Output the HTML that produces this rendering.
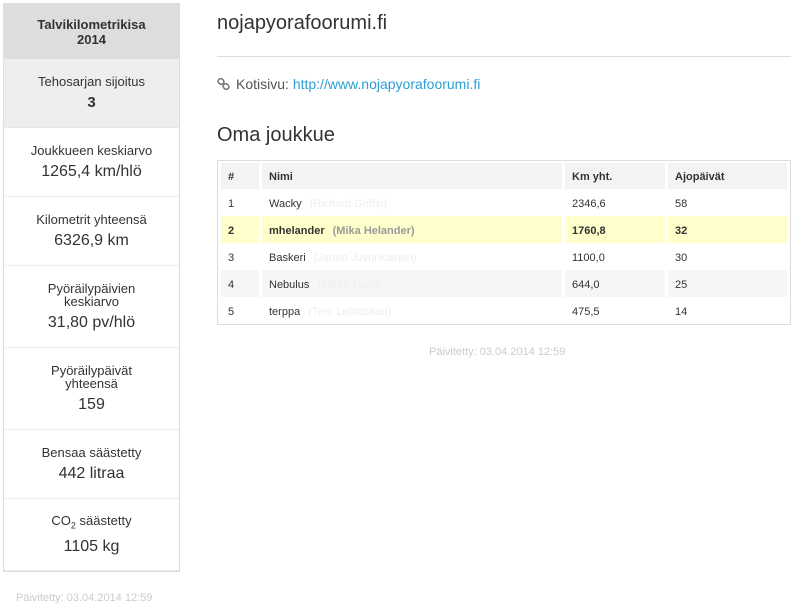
<!DOCTYPE html>
<html><head><meta charset="utf-8"><style>
body{margin:0;width:794px;height:607px;background:#fff;font-family:"Liberation Sans",sans-serif;color:#333;position:relative;overflow:hidden}
.sb{position:absolute;left:3px;top:3px;width:175px;border:1px solid #ddd;border-top:none}
.s{display:flex;flex-direction:column;justify-content:center;align-items:center;text-align:center;border-bottom:1px dotted #ddd;box-sizing:border-box;padding-top:2px}
.s .l{font-size:13px;line-height:13px}
.s .v{font-size:16px;line-height:20px;margin-top:5px}
.hd{background:#ddd;font-weight:bold;font-size:13px;line-height:15px;height:56px}
.ab{position:absolute}
table{position:absolute;left:217px;top:160px;width:574px;border:1px solid #ddd;border-spacing:3px 0;padding:2px 0 0;font-size:11px;border-collapse:separate}
td,th{height:27px;padding:3px 0 0 7px;text-align:left;box-sizing:border-box}
th{height:26px;padding-top:2px;background:#f3f3f3;font-weight:bold}
tr.y td{background:#ffffcc;font-weight:bold}
tr.g td{background:#f6f6f6}
.r{color:#eee;margin-left:8px}
tr.y .r{color:#999}
</style></head><body>
<div class="sb">
<div class="s hd" style="border:none"><div>Talvikilometrikisa<br>2014</div></div>
<div class="s" style="height:69px;background:#eee"><div class="l">Tehosarjan sijoitus</div><div class="v" style="font-weight:bold;font-size:15px">3</div></div>
<div class="s" style="height:69px"><div class="l">Joukkueen keskiarvo</div><div class="v">1265,4 km/hlö</div></div>
<div class="s" style="height:69px"><div class="l">Kilometrit yhteensä</div><div class="v">6326,9 km</div></div>
<div class="s" style="height:82px"><div class="l">Pyöräilypäivien<br>keskiarvo</div><div class="v">31,80 pv/hlö</div></div>
<div class="s" style="height:82px"><div class="l">Pyöräilypäivät<br>yhteensä</div><div class="v">159</div></div>
<div class="s" style="height:69px"><div class="l">Bensaa säästetty</div><div class="v">442 litraa</div></div>
<div class="s" style="height:72px"><div class="l">CO<sub style="font-size:9px">2</sub> säästetty</div><div class="v">1105 kg</div></div>
</div>
<div class="ab" style="left:16px;top:592px;font-size:11px;color:#ccc">Päivitetty: 03.04.2014 12:59</div>
<div class="ab" style="left:217px;top:12px;font-size:20px">nojapyorafoorumi.fi</div>
<div class="ab" style="left:217px;top:56px;width:574px;border-top:1px solid #ddd"></div>
<svg class="ab" style="left:217px;top:78px" width="13" height="12" viewBox="0 0 13 12"><g fill="none" stroke="#777" stroke-width="1.6"><rect x="1" y="1" width="6" height="5" rx="2.5" transform="rotate(35 4 3.5)"/><rect x="6" y="6" width="6" height="5" rx="2.5" transform="rotate(35 9 8.5)"/></g></svg>
<div class="ab" style="left:236px;top:76px;font-size:14px;color:#555">Kotisivu: <span style="color:#2a9fd6">http://www.nojapyorafoorumi.fi</span></div>
<div class="ab" style="left:217px;top:124px;font-size:20px">Oma joukkue</div>
<table>
<tr><th style="width:38px">#</th><th style="width:300px">Nimi</th><th style="width:100px">Km yht.</th><th>Ajopäivät</th></tr>
<tr><td>1</td><td>Wacky<span class="r">(Richard Griffin)</span></td><td>2346,6</td><td>58</td></tr>
<tr class="y"><td>2</td><td>mhelander<span class="r">(Mika Helander)</span></td><td>1760,8</td><td>32</td></tr>
<tr><td>3</td><td>Baskeri<span class="r">(Jarmo Juvonkainen)</span></td><td>1100,0</td><td>30</td></tr>
<tr class="g"><td>4</td><td>Nebulus<span class="r">(Mikko Nelo)</span></td><td>644,0</td><td>25</td></tr>
<tr><td>5</td><td>terppa<span class="r">(Tero Lehtosaari)</span></td><td>475,5</td><td>14</td></tr>
</table>
<div class="ab" style="left:429px;top:346px;font-size:11px;color:#ccc">Päivitetty: 03.04.2014 12:59</div>
</body></html>
